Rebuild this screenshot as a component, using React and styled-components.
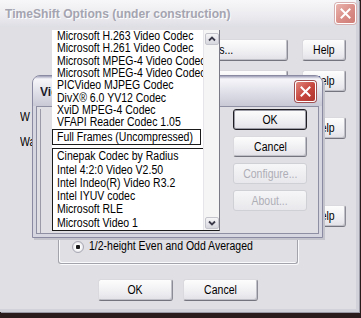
import React from 'react'
import styled, { createGlobalStyle, css } from 'styled-components'

const GlobalStyle = createGlobalStyle`
  html, body {
    margin: 0;
    padding: 0;
  }
  body {
    background: #2a1c1c;
    font-family: "Liberation Sans", Arial, sans-serif;
    font-size: 12.5px;
    color: #000;
  }
`

// the screenshot's Tahoma-like face is narrower than Arial, so squeeze it
const Text = styled.span`
  display: inline-block;
  white-space: nowrap;
  transform: scaleX(${({ $sx }) => $sx || 0.84});
  transform-origin: ${({ $origin }) => $origin || 'left center'};
`

const Desktop = styled.div`
  position: relative;
  width: 361px;
  height: 318px;
  overflow: hidden;
  background: #2a1c1c;
`

const MainWindow = styled.div`
  box-sizing: border-box;
  width: 359px;
  height: 312px;
  background: #e0dfe3;
  border-right: 3px solid #d2d2da;
  border-bottom: 3px solid #d2d2da;
  box-shadow: 1px 1px 0 #9a9aa6;
  display: flex;
  flex-direction: column;
`

const TitleBar = styled.div`
  height: 27px;
  flex: none;
  display: flex;
  align-items: center;
  justify-content: space-between;
  padding: 0 0 0 5px;
  background: ${({ $active }) =>
    $active
      ? 'linear-gradient(#9d9db8 0, #f6f6fa 3px, #e4e4ec 45%, #c9c9d6 100%)'
      : 'linear-gradient(#f7f7f9, #ececf0 55%, #dedee5)'};
`

const Title = styled.span`
  flex: 1;
  min-width: 0;
  font-weight: bold;
  font-size: 13px;
  color: ${({ $active }) => ($active ? '#1a1a2a' : '#a4a4b0')};
  text-shadow: ${({ $active }) => ($active ? 'none' : '1px 1px 0 #fff')};
  white-space: nowrap;
  overflow: hidden;
`

const CloseButton = styled.div`
  width: 21px;
  height: 21px;
  flex: none;
  box-sizing: border-box;
  border-radius: 3px;
  border: 1px solid #fff;
  display: flex;
  align-items: center;
  justify-content: center;
  ${({ $active }) =>
    $active
      ? css`
          background: linear-gradient(135deg, #e2867c, #c5453c 55%, #b0362f);
          box-shadow: 0 0 0 1px #a05050;
        `
      : css`
          background: linear-gradient(135deg, #eab4ae, #d88a84 60%, #cf7c76);
          box-shadow: 0 0 0 1px #d6b0b0;
        `}
`

const Body = styled.div`
  flex: 1;
  display: flex;
  flex-direction: column;
`

const ButtonRow = styled.div`
  display: flex;
  justify-content: flex-end;
  gap: 14px;
  padding-right: 10px;
  margin-top: ${({ $top }) => $top}px;
`

const Button = styled.div`
  box-sizing: border-box;
  width: ${({ $w }) => $w}px;
  height: ${({ $h }) => $h || 22}px;
  display: flex;
  align-items: center;
  justify-content: center;
  border-radius: 3px;
  border: 1px solid;
  border-color: #dadade #8c8c96 #74747e #dadade;
  background: linear-gradient(#fdfdfd, #ececf0 70%, #e2e2e6);
  box-shadow: inset -1px -1px 0 #c0c0c8;
  white-space: nowrap;
  ${({ $default }) =>
    $default &&
    css`
      border: 1px solid #1e1e24;
      box-shadow: inset 0 0 0 1px #9c9ca6;
    `}
  ${({ $disabled }) =>
    $disabled &&
    css`
      color: #aeaeb6;
      border-color: #cfcfd6;
      box-shadow: none;
      background: linear-gradient(#f6f6f8, #e8e8ec);
    `}
`

const LabelRow = styled.div`
  display: flex;
  justify-content: space-between;
  align-items: flex-start;
  padding: 0 10px 0 20px;
  margin-top: 18px;
`

const Labels = styled.div`
  display: flex;
  flex-direction: column;
  gap: 11px;
  line-height: 14px;
`

const HelpSlot = styled.div`
  margin-top: 7px;
`

const GroupBox = styled.div`
  box-sizing: border-box;
  margin: 3px 0 0 58px;
  width: 240px;
  height: 34px;
  border: 1px solid #a3a3ac;
  border-top: none;
  border-radius: 0 0 3px 3px;
  box-shadow: 1px 1px 0 #fafafc, inset 1px -1px 0 #fafafc;
  display: flex;
  align-items: flex-end;
  padding: 0 0 10px 13px;
`

const RadioRow = styled.label`
  display: flex;
  align-items: center;
  gap: 5px;
  line-height: 13px;
`

const Radio = styled.span`
  box-sizing: border-box;
  flex: none;
  width: 12px;
  height: 12px;
  border-radius: 50%;
  border: 1px solid #a8a8b4;
  background: radial-gradient(circle at 50% 50%, #1a1a1a 0 2px, #fff 2.5px, #f2f2f4 4px, #d8d8de 6px);
`

const FooterRow = styled.div`
  display: flex;
  gap: 10px;
  padding-left: 98px;
  margin-top: 15px;
`

const Dialog = styled.div`
  position: absolute;
  left: 32px;
  top: 75px;
  width: 291px;
  height: 163px;
  box-sizing: border-box;
  border: 1px solid #8a8aa2;
  border-radius: 8px 8px 0 0;
  background: #d6d6e0;
  padding: 0 3px 3px 3px;
  display: flex;
  flex-direction: column;
  box-shadow: 2px 2px 0 #c4c4cc;
`

const DialogTitle = styled(TitleBar)`
  margin: 0 -3px;
  height: 30px;
  border-radius: 7px 7px 0 0;
  padding: 0 6px 0 7px;
`

const DialogBody = styled.div`
  flex: 1;
  box-sizing: border-box;
  border: 1px solid #8f8fa4;
  background: #e0dfe3;
  display: flex;
  justify-content: space-between;
  padding: 2px 11px 0 3px;
`

const Frame = styled.div`
  width: 178px;
  border-left: 1px solid #9a9aa8;
  height: 100%;
  box-sizing: border-box;
`

const DialogButtons = styled.div`
  display: flex;
  flex-direction: column;
  gap: 6px;
`

const Popup = styled.div`
  position: absolute;
  left: 52px;
  top: 30px;
  width: 168px;
  height: 201px;
  background: #fff;
  display: flex;
  box-sizing: border-box;
  border-right: 1px solid #7a7a86;
  border-bottom: 1px solid #1a1a1a;
  z-index: 5;
`

const Items = styled.div`
  flex: 1;
  min-width: 0;
  display: flex;
  flex-direction: column;
`

const Item = styled.div`
  height: 12.75px;
  line-height: 13px;
  padding-left: 5px;
  white-space: nowrap;
  overflow: hidden;
`

const Selected = styled.div`
  height: 17px;
  box-sizing: border-box;
  border: 1px solid #1a1a1a;
  margin-right: 2px;
  line-height: 15px;
  padding-left: 4px;
  white-space: nowrap;
  overflow: hidden;
`

const Lower = styled.div`
  flex: 1;
  margin-top: 3px;
  border-top: 1px solid #1a1a1a;
  border-left: 1px solid #1a1a1a;
  padding-top: 1px;
`

const LowerItem = styled(Item)`
  height: 13.3px;
  padding-left: 4px;
`

const ScrollBar = styled.div`
  width: 16px;
  flex: none;
  box-sizing: border-box;
  background: #f5f5f6;
  border-left: 1px solid #e6e6ea;
  display: flex;
  flex-direction: column;
  justify-content: space-between;
  padding: 3px 0 1px 1px;
`

const ArrowButton = styled.div`
  width: 14px;
  height: 12px;
  box-sizing: border-box;
  border-radius: 2px;
  border: 1px solid #c4c4cc;
  background: linear-gradient(#f6f6f8, #d6d6de);
  display: flex;
  align-items: center;
  justify-content: center;
`

const upperCodecs = [
  'Microsoft H.263 Video Codec',
  'Microsoft H.261 Video Codec',
  'Microsoft MPEG-4 Video Codec',
  'Microsoft MPEG-4 Video Codec',
  'PICVideo MJPEG Codec',
  'DivX® 6.0 YV12 Codec',
  'XviD MPEG-4 Codec',
  'VFAPI Reader Codec 1.05',
]

const lowerCodecs = [
  'Cinepak Codec by Radius',
  'Intel 4:2:0 Video V2.50',
  'Intel Indeo(R) Video R3.2',
  'Intel IYUV codec',
  'Microsoft RLE',
  'Microsoft Video 1',
]

function CloseX() {
  return (
    <svg width="11" height="11" viewBox="0 0 11 11">
      <path d="M1.5 1.5 L9.5 9.5 M9.5 1.5 L1.5 9.5" stroke="#fff" strokeWidth="2" strokeLinecap="square" />
    </svg>
  )
}

function Chevron({ down }) {
  return (
    <svg width="8" height="6" viewBox="0 0 8 6">
      <path d={down ? 'M1 1.5 L4 4.5 L7 1.5' : 'M1 4.5 L4 1.5 L7 4.5'} stroke="#3a3a4a" strokeWidth="1.8" fill="none" />
    </svg>
  )
}

function Btn({ children, ...props }) {
  return (
    <Button {...props}>
      <Text $origin="center">{children}</Text>
    </Button>
  )
}

export default function App() {
  return (
    <Desktop>
      <GlobalStyle />
      <MainWindow>
        <TitleBar>
          <Title>
            <Text $sx={0.93}>TimeShift Options (under construction)</Text>
          </Title>
          <CloseButton>
            <CloseX />
          </CloseButton>
        </TitleBar>
        <Body>
          <ButtonRow $top={12}>
            <Btn $w={154}>Options...</Btn>
            <Btn $w={44}>Help</Btn>
          </ButtonRow>
          <ButtonRow $top={9}>
            <Btn $w={154} />
            <Btn $w={44}>Help</Btn>
          </ButtonRow>
          <LabelRow>
            <Labels>
              <Text>W</Text>
              <Text>Wa</Text>
            </Labels>
            <HelpSlot>
              <Btn $w={44}>Help</Btn>
            </HelpSlot>
          </LabelRow>
          <ButtonRow $top={56}>
            <Btn $w={44}>Help</Btn>
          </ButtonRow>
          <GroupBox>
            <RadioRow>
              <Radio />
              <Text>1/2-height Even and Odd Averaged</Text>
            </RadioRow>
          </GroupBox>
          <FooterRow>
            <Btn $w={75}>OK</Btn>
            <Btn $w={75}>Cancel</Btn>
          </FooterRow>
        </Body>
      </MainWindow>

      <Dialog>
        <DialogTitle $active>
          <Title $active>
            <Text $sx={0.93}>Video Compression</Text>
          </Title>
          <CloseButton $active>
            <CloseX />
          </CloseButton>
        </DialogTitle>
        <DialogBody>
          <Frame />
          <DialogButtons>
            <Btn $w={74} $h={21} $default>OK</Btn>
            <Btn $w={74} $h={21}>Cancel</Btn>
            <Btn $w={74} $h={21} $disabled>Configure...</Btn>
            <Btn $w={74} $h={21} $disabled>About...</Btn>
          </DialogButtons>
        </DialogBody>
      </Dialog>

      <Popup>
        <Items>
          {upperCodecs.map((name, i) => (
            <Item key={i}>
              <Text>{name}</Text>
            </Item>
          ))}
          <Selected>
            <Text>Full Frames (Uncompressed)</Text>
          </Selected>
          <Lower>
            {lowerCodecs.map((name) => (
              <LowerItem key={name}>
                <Text>{name}</Text>
              </LowerItem>
            ))}
          </Lower>
        </Items>
        <ScrollBar>
          <ArrowButton>
            <Chevron />
          </ArrowButton>
          <ArrowButton>
            <Chevron down />
          </ArrowButton>
        </ScrollBar>
      </Popup>
    </Desktop>
  )
}
